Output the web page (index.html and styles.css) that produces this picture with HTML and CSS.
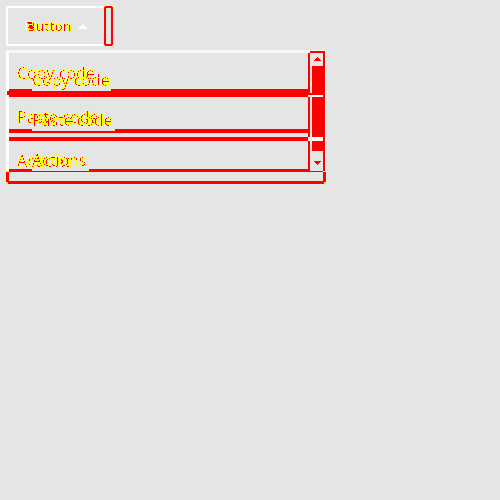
FILE: index.html
```html
<!DOCTYPE html>
<html lang="en">
<head>
<meta charset="utf-8">
<title>Menu comparison</title>
<link rel="stylesheet" href="styles.css">
</head>
<body>
<svg class="defs" aria-hidden="true">
  <filter id="split" x="-10%" y="-20%" width="120%" height="140%" color-interpolation-filters="sRGB">
    <feColorMatrix values="0 0 0 0 1  0 0 0 1 0  0 0 0 0 0  0 0 0 1 0"/>
    <feComponentTransfer>
      <feFuncG type="discrete" tableValues="1 1 1 1 1 1 1 1 1 0"/>
      <feFuncA type="discrete" tableValues="0 1 1 1 1 1 1 1 1 1 1 1"/>
    </feComponentTransfer>
  </filter>
</svg>
<main class="page">
  <div class="button">
    <span class="label">Button</span>
    <svg class="caret" width="10" height="5" viewBox="0 0 10 5"><path d="M0 5 5 0 10 5z"/></svg>
  </div>
  <div class="menu">
    <div class="item"><span class="old">Copy code</span><span class="new">Copy code</span></div>
    <div class="item"><span class="old">Paste code</span><span class="new">Paste code</span></div>
    <div class="item"><span class="old">Actions</span><span class="new">Actions</span></div>
  </div>
  <svg class="marks" width="500" height="500" viewBox="0 0 500 500" shape-rendering="crispEdges">
    <g class="red">
      <path d="M105 6h7v1h1v38h-1v1h-7v-1h-1V7h1zM106 8v36h5V8z" fill-rule="evenodd"/>
      <path d="M9 89h23v2h78v-2h200v8H9v-2H7v-4h2z"/>
      <path d="M9 129h23v2h82v-2h195v4H9zM9 137h300v4H9z"/>
      <path d="M9 169h23v2h56v-2h221v2h14v1H9z"/>
      <path d="M308 53h2v119h-2zM310 51h15v121h-2V53h-13z"/>
      <path d="M312 66h11v85h-11zM310 93h2v2h-2z"/>
      <path d="M317 57h1v1h1v1h1v1h1v1h-7v-1h1v-1h1v-1h1zM314 161h7v1h-1v1h-1v1h-1v1h-1v-1h-1v-1h-1v-1h-1z"/>
      <path d="M6 172h3v9h314v-9h3v10h-1v2H8v-2H6z"/>
      <path d="M27 22h3v1h-3zM28 23h4v1h-4zM29 25h3v1h-3zM28 27h5v1h-5zM30 28h3v1h-3z"/>
    </g>
    <path class="white" d="M308 95h2v2h-2zM312 95h11v2h-11zM308 137h2v4h-2zM312 137h11v4h-11zM26 21h1v10h-1z"/>
    <path class="yellow" d="M104 6h1v1h-1zM112 6h1v1h-1zM104 45h1v1h-1zM112 45h1v1h-1zM6 170h2v2H6zM6 182h2v2H6zM323 171h3v1h-3zM324 182h2v2h-2zM110 89h1v2h-1zM114 129h1v2h-1zM88 169h1v2h-1z"/>
  </svg>
</main>
</body>
</html>
```
FILE: styles.css
```css
* { box-sizing: border-box; }
body {
  margin: 0;
  background: #e5e5e5;
  font-family: "Noto Sans", sans-serif;
}
.defs { position: absolute; width: 0; height: 0; }
.page { position: relative; width: 500px; height: 500px; padding: 6px; overflow: hidden; }
.button {
  display: flex;
  align-items: center;
  gap: 6px;
  width: 102px;
  height: 40px;
  padding-left: 19px;
  border: 2px solid #fff;
  border-right: 0;
  border-radius: 2px 0 0 2px;
  font-size: 13px;
  font-weight: 600;
  letter-spacing: 0.1px;
}
.label { width: 45px; filter: url(#split); }
.caret { fill: #fff; }
.menu {
  width: 320px;
  height: 122px;
  margin-top: 4px;
  padding: 0 0 0 8px;
  border: solid #fff;
  border-width: 3px 1px 0 3px;
  border-top-color: #f7f7f7;
  border-radius: 2px 2px 0 0;
}
.item { position: relative; height: 44px; font-size: 16px; line-height: 22px; padding-top: 9px; }
.item:last-child { height: 30px; }
.old, .new { filter: url(#split); display: inline-block; }
.new { position: absolute; left: 15px; top: 16px; }
.item:nth-child(2) .new { top: 12px; letter-spacing: -0.1px; }
.item:nth-child(3) .new { top: 8px; letter-spacing: -0.1px; }
.marks { position: absolute; left: 0; top: 0; }
.red { fill: #f00; }
.white { fill: #fff; }
.yellow { fill: #ff0; }
```
